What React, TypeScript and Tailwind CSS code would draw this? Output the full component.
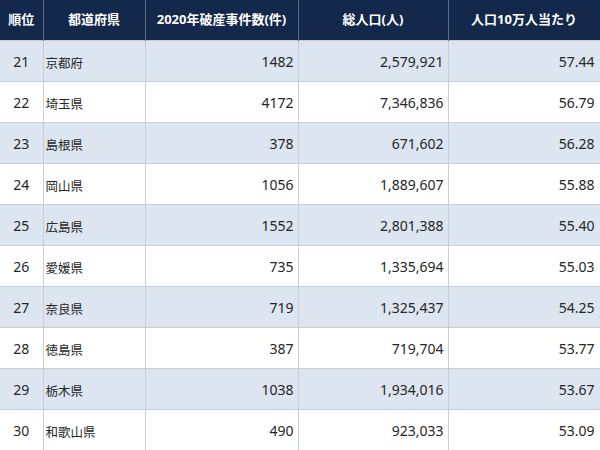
const rows = [
  ["21", "京都府", "1482", "2,579,921", "57.44"],
  ["22", "埼玉県", "4172", "7,346,836", "56.79"],
  ["23", "島根県", "378", "671,602", "56.28"],
  ["24", "岡山県", "1056", "1,889,607", "55.88"],
  ["25", "広島県", "1552", "2,801,388", "55.40"],
  ["26", "愛媛県", "735", "1,335,694", "55.03"],
  ["27", "奈良県", "719", "1,325,437", "54.25"],
  ["28", "徳島県", "387", "719,704", "53.77"],
  ["29", "栃木県", "1038", "1,934,016", "53.67"],
  ["30", "和歌山県", "490", "923,033", "53.09"],
];

const App = () => {
  return (
    <div className="w-[600px] h-[450px] overflow-hidden bg-white font-['Noto_Sans','Noto_Sans_CJK_JP',sans-serif] text-[14px] text-[#262626]">
      <table className="w-[600px] border-collapse table-fixed">
        <colgroup>
          <col className="w-[43px]" />
          <col className="w-[102px]" />
          <col className="w-[153px]" />
          <col className="w-[150px]" />
          <col className="w-[152px]" />
        </colgroup>
        <thead>
          <tr className="h-[40px] bg-[#13284a] text-white text-[13px]">
            <th className="border-x border-[#5a6a82] border-l-0 font-bold">順位</th>
            <th className="border-x border-[#5a6a82] font-bold">都道府県</th>
            <th className="border-x border-[#5a6a82] font-bold">2020年破産事件数(件)</th>
            <th className="border-x border-[#5a6a82] font-bold">総人口(人)</th>
            <th className="border-x border-[#5a6a82] border-r-[#c8ced8] font-bold">人口10万人当たり</th>
          </tr>
        </thead>
        <tbody>
          {rows.map((r, i) => (
            <tr
              key={r[0]}
              className={`h-[41px] ${i % 2 === 0 ? "bg-[#dce5f0]" : "bg-white"}`}
            >
              <td className="border border-[#c8ced8] border-l-0 pt-[2px] text-center">{r[0]}</td>
              <td className="border border-[#c8ced8] pl-[2px] pt-[8px] text-[12.5px]">{r[1]}</td>
              <td className="border border-[#c8ced8] pt-[2px] text-right pr-[4px]">{r[2]}</td>
              <td className="border border-[#c8ced8] pt-[2px] text-right pr-[4px]">{r[3]}</td>
              <td className="border border-[#c8ced8] pt-[2px] text-right pr-[5px]">{r[4]}</td>
            </tr>
          ))}
        </tbody>
      </table>
    </div>
  );
};

export default App;
